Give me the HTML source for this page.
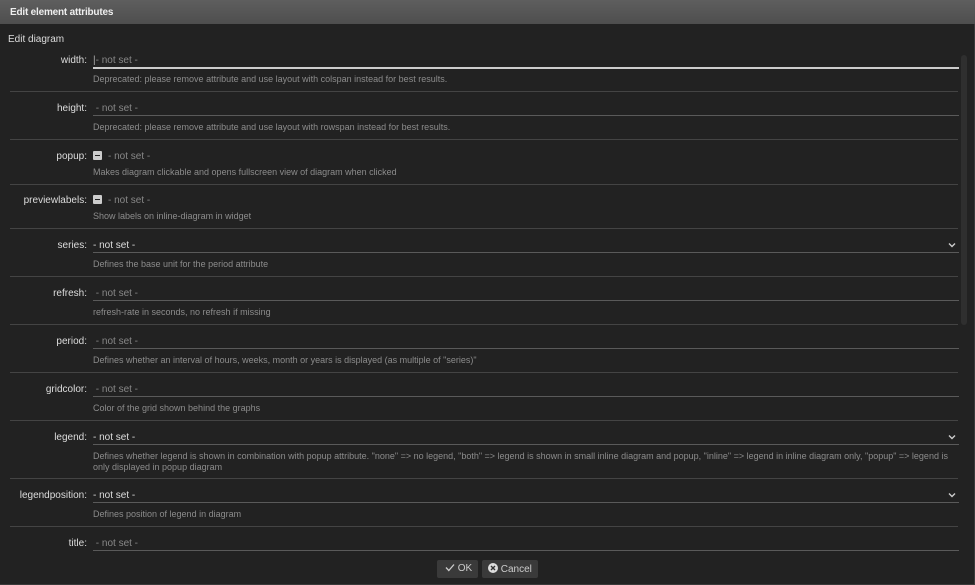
<!DOCTYPE html>
<html><head><meta charset="utf-8"><style>
*{margin:0;padding:0;box-sizing:border-box}
body{width:975px;height:585px;background:#222;font-family:"Liberation Sans",sans-serif;position:relative;overflow:hidden;color:#ccc}
.tb{position:absolute;left:0;top:0;width:975px;height:24px;background:linear-gradient(#5e5e5e,#4e4e4e);color:#eee;font-size:10px;font-weight:bold;padding:7px 0 0 10px;letter-spacing:-0.2px}
.rb{position:absolute;right:0;top:24px;width:1px;height:561px;background:#3a3a3a}
.bb{position:absolute;left:0;bottom:0;width:975px;height:1px;background:#3a3a3a}
.lb{position:absolute;left:0;width:87px;text-align:right;font-size:10px;color:#ddd;margin-top:1px}
.v{position:absolute;left:93px;font-size:10px;color:#888;margin-top:1px}
.v.s{color:#ddd}
.ln{position:absolute;left:93px;width:866px;height:1px;background:#5a5a5a}
.d{position:absolute;left:93px;font-size:9px;color:#8c8c8c;width:866px;line-height:11px;margin-top:1px}
.sp{position:absolute;left:10px;width:948px;height:1px;background:#444}
.cb{display:inline-block;width:9px;height:9px;background:#ccc;border-radius:1px;vertical-align:-1px;margin-right:6px;position:relative}
.cb:after{content:"";position:absolute;left:2px;top:4px;width:5px;height:1px;background:#222}
.ch{position:absolute;left:948px;width:8px;height:8px}
.btn{position:absolute;top:560px;height:18px;background:#3a3a3a;border-radius:2px;font-size:10px;color:#ccc;padding-top:3px}
</style></head><body>
<div class="tb">Edit element attributes</div>
<div class="rb"></div><div class="bb"></div>
<div style="position:absolute;left:8px;top:34px;font-size:10px;color:#ddd">Edit diagram</div>
<div style="position:absolute;left:961px;top:55px;width:6px;height:270px;background:#2f2f2f;border-radius:3px"></div>

<div class="lb" style="top:54px">width:</div>
<div class="v" style="top:54px"><span style="color:#aaa">|</span>- not set -</div>
<div class="ln" style="top:67px;background:#ccc;height:1.5px"></div>
<div class="d" style="top:73px">Deprecated: please remove attribute and use layout with colspan instead for best results.</div>
<div class="sp" style="top:91px"></div>

<div class="lb" style="top:102px">height:</div>
<div class="v" style="top:102px">&nbsp;- not set -</div>
<div class="ln" style="top:115px"></div>
<div class="d" style="top:121px">Deprecated: please remove attribute and use layout with rowspan instead for best results.</div>
<div class="sp" style="top:139px"></div>

<div class="lb" style="top:150px">popup:</div>
<div class="v" style="top:150px"><span class="cb"></span>- not set -</div>
<div class="d" style="top:166px">Makes diagram clickable and opens fullscreen view of diagram when clicked</div>
<div class="sp" style="top:184px"></div>

<div class="lb" style="top:194px">previewlabels:</div>
<div class="v" style="top:194px"><span class="cb"></span>- not set -</div>
<div class="d" style="top:210px">Show labels on inline-diagram in widget</div>
<div class="sp" style="top:228px"></div>

<div class="lb" style="top:239px">series:</div>
<div class="v s" style="top:239px">- not set -</div>
<svg class="ch" style="top:241px" viewBox="0 0 8 8"><path d="M1 2.5L4 5.5L7 2.5" stroke="#ccc" stroke-width="1.4" fill="none"/></svg>
<div class="ln" style="top:252px"></div>
<div class="d" style="top:258px">Defines the base unit for the period attribute</div>
<div class="sp" style="top:276px"></div>

<div class="lb" style="top:287px">refresh:</div>
<div class="v" style="top:287px">&nbsp;- not set -</div>
<div class="ln" style="top:300px"></div>
<div class="d" style="top:306px">refresh-rate in seconds, no refresh if missing</div>
<div class="sp" style="top:324px"></div>

<div class="lb" style="top:335px">period:</div>
<div class="v" style="top:335px">&nbsp;- not set -</div>
<div class="ln" style="top:348px"></div>
<div class="d" style="top:354px">Defines whether an interval of hours, weeks, month or years is displayed (as multiple of "series)"</div>
<div class="sp" style="top:372px"></div>

<div class="lb" style="top:383px">gridcolor:</div>
<div class="v" style="top:383px">&nbsp;- not set -</div>
<div class="ln" style="top:396px"></div>
<div class="d" style="top:402px">Color of the grid shown behind the graphs</div>
<div class="sp" style="top:420px"></div>

<div class="lb" style="top:431px">legend:</div>
<div class="v s" style="top:431px">- not set -</div>
<svg class="ch" style="top:433px" viewBox="0 0 8 8"><path d="M1 2.5L4 5.5L7 2.5" stroke="#ccc" stroke-width="1.4" fill="none"/></svg>
<div class="ln" style="top:444px"></div>
<div class="d" style="top:450px">Defines whether legend is shown in combination with popup attribute. "none" =&gt; no legend, "both" =&gt; legend is shown in small inline diagram and popup, "inline" =&gt; legend in inline diagram only, "popup" =&gt; legend is only displayed in popup diagram</div>
<div class="sp" style="top:478px"></div>

<div class="lb" style="top:489px">legendposition:</div>
<div class="v s" style="top:489px">- not set -</div>
<svg class="ch" style="top:491px" viewBox="0 0 8 8"><path d="M1 2.5L4 5.5L7 2.5" stroke="#ccc" stroke-width="1.4" fill="none"/></svg>
<div class="ln" style="top:502px"></div>
<div class="d" style="top:508px">Defines position of legend in diagram</div>
<div class="sp" style="top:526px"></div>

<div class="lb" style="top:537px">title:</div>
<div class="v" style="top:537px">&nbsp;- not set -</div>
<div class="ln" style="top:550px"></div>

<div class="btn" style="left:437px;width:41px;padding-left:8px"><svg width="10" height="9" viewBox="0 0 10 9" style="vertical-align:-1px"><path d="M1 4.5L3.8 7.5L9 1.5" stroke="#ccc" stroke-width="1.3" fill="none"/></svg> OK</div>
<div class="btn" style="left:482px;width:56px;padding-left:6px"><svg width="10" height="10" viewBox="0 0 10 10" style="vertical-align:-1px"><circle cx="5" cy="5" r="5" fill="#ddd"/><path d="M3 3L7 7M7 3L3 7" stroke="#333" stroke-width="1.4"/></svg> Cancel</div>
</body></html>
